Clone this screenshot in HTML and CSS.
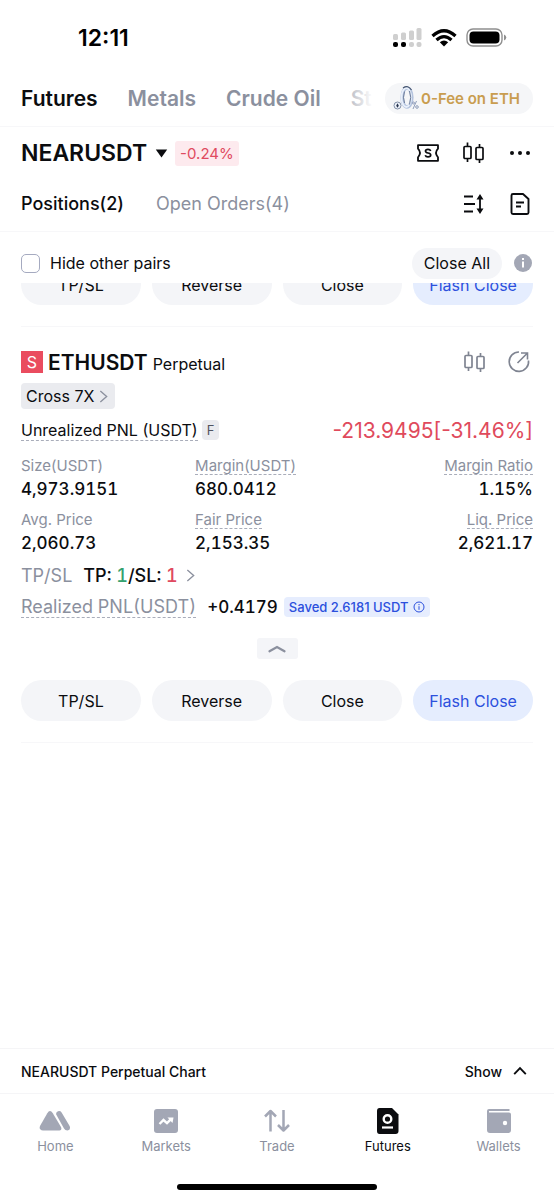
FILE: index.html
```html
<!DOCTYPE html>
<html lang="en">
<head>
    <meta charset="UTF-8">
    <meta name="viewport" content="width=device-width, initial-scale=1.0">
    <title>Futures</title>
    <link rel="stylesheet" href="styles.css">
</head>
<body>
    <!-- shared icons -->
    <svg class="defs" width="0" height="0">
        <symbol id="candles" viewBox="0 0 24 24">
            <g fill="none" stroke="currentColor" stroke-width="1.7">
                <rect x="2" y="5.500" width="7" height="12" rx="1"/>
                <rect x="14" y="6.500" width="7" height="12" rx="1"/>
                <path d="M5.500 1.500v4M5.500 17.500v3.500M17.500 3v3.500M17.500 18.500v3.500"/>
            </g>
        </symbol>
        <symbol id="chevron" viewBox="0 0 10 14">
            <path d="M1.500 1l7 6-7 6" fill="none" stroke="currentColor" stroke-width="1.500"/>
        </symbol>
    </svg>

    <div class="status">
        <span class="time">12:11</span>
        <div class="status-icons">
            <svg width="29" height="20" viewBox="0 0 29 20">
                <g fill="#cfcfcf">
                    <rect x="0" y="6" width="5" height="6" rx="1.500"/>
                    <rect x="8" y="4.500" width="5" height="7.500" rx="1.500"/>
                    <rect x="16" y="2.500" width="5" height="9.500" rx="1.500"/>
                    <rect x="23.500" y="0" width="5" height="12" rx="1.500"/>
                    <rect x="16" y="14" width="5" height="5" rx="2"/>
                    <rect x="23.500" y="14" width="5" height="5" rx="2"/>
                </g>
                <rect x="0" y="14" width="5" height="5" rx="2"/>
                <rect x="8" y="14" width="5" height="5" rx="2"/>
            </svg>
            <svg width="26" height="20" viewBox="0 0 26 20">
                <g fill="none" stroke="#000" stroke-width="3.300">
                    <path d="M1.500 8Q13-2.500 24.500 8"/>
                    <path d="M5.500 12Q13 5.200 20.500 12"/>
                </g>
                <path d="M13 18.500l-4.200-4.300q4.200-3.200 8.400 0z"/>
            </svg>
            <svg width="41" height="20" viewBox="0 0 41 20">
                <rect x="1" y="1" width="35" height="17" rx="6" fill="none" stroke="#8f8f8f" stroke-width="1.400"/>
                <rect x="3.500" y="3.500" width="30" height="12" rx="4"/>
                <path d="M38 6.500q2.300 1 2.300 3t-2.300 3z" fill="#8f8f8f"/>
            </svg>
        </div>
    </div>

    <nav class="markets">
        <div class="market-tabs">
            <a href="#" class="active">Futures</a>
            <a href="#">Metals</a>
            <a href="#">Crude Oil</a>
            <a href="#">St</a>
        </div>
        <a href="#" class="promo">
            <svg width="26" height="26" viewBox="0 0 26 26">
                <ellipse cx="14" cy="12.500" rx="4.800" ry="9.500" fill="none" stroke="#b4c3de" stroke-width="3.600"/>
                <ellipse cx="13.300" cy="12.500" rx="4.800" ry="9.500" fill="none" stroke="#e9f0fb" stroke-width="1.800"/>
                <path d="M16.500 6q2.500 6 0 13.500M11.500 18q-2-5.500 0-11.500" fill="none" stroke="#6b7b99"/>
                <path d="M10 3Q15-.500 18.500 5" fill="none" stroke="#46556f" stroke-width="1.200"/>
                <circle cx="4.500" cy="20.500" r="3.500" fill="#eef3fb" stroke="#8491a8"/>
                <path d="M4.500 18.300l-1.300 2.400 1.300 2 1.300-2z" fill="#26334d"/>
                <path d="M20 24l3.500-8" stroke="#8f9dba"/>
                <circle cx="20.500" cy="18" r="1" fill="none" stroke="#8f9dba"/>
                <circle cx="24" cy="22" r="1.300" fill="none" stroke="#8f9dba"/>
            </svg>
            0-Fee on ETH
        </a>
    </nav>

    <header class="pair">
        <button type="button" class="pair-name">NEARUSDT
            <svg width="13" height="9" viewBox="0 0 13 9"><path d="M.8.5h11.400L6.500 8.500z" fill="currentColor"/></svg>
        </button>
        <span class="change">-0.24%</span>
        <div class="tools">
            <button type="button" aria-label="Coupons">
                <svg width="24" height="24" viewBox="0 0 24 24">
                    <path d="M2 4.200h20v3.500q-4 4.300 0 8.600v3.500H2v-3.500q4-4.300 0-8.600z" fill="none" stroke="currentColor" stroke-width="1.800" stroke-linejoin="round"/>
                    <path d="M14.700 10q-.6-1.700-2.700-1.700-2.500 0-2.500 1.800 0 1.500 2.500 1.900 2.700.4 2.700 2.100 0 1.800-2.700 1.800-2.200 0-2.800-1.700" fill="none" stroke="currentColor" stroke-width="1.700"/>
                </svg>
            </button>
            <button type="button" aria-label="Chart"><svg width="24" height="24"><use href="#candles"/></svg></button>
            <button type="button" aria-label="More">
                <svg width="24" height="24" viewBox="0 0 24 24" fill="currentColor"><circle cx="4" cy="12" r="2"/><circle cx="12" cy="12" r="2"/><circle cx="20" cy="12" r="2"/></svg>
            </button>
        </div>
    </header>

    <nav class="tabs">
        <a href="#" class="active">Positions(2)</a>
        <a href="#">Open Orders(4)</a>
        <div class="tools">
            <button type="button" aria-label="Sort">
                <svg width="24" height="24" viewBox="0 0 24 24">
                    <path d="M2 4.500h9M2 12h11M2 19.500h9M18 5v14" fill="none" stroke="currentColor" stroke-width="1.800"/>
                    <path d="M18 2l3.500 5.500h-7zM18 22l-3.500-5.500h7z" fill="currentColor"/>
                </svg>
            </button>
            <button type="button" aria-label="History">
                <svg width="24" height="24" viewBox="0 0 24 24" fill="none" stroke="currentColor" stroke-width="1.900" stroke-linejoin="round">
                    <path d="M5 2h10l5.500 5v13.500q0 1.500-1.500 1.500H5q-1.500 0-1.500-1.500v-17Q3.500 2 5 2z"/>
                    <path d="M8 10.500h8M8 14.500h5"/>
                </svg>
            </button>
        </div>
    </nav>

    <div class="filter">
        <label><input type="checkbox"> Hide other pairs</label>
        <button type="button" class="close-all">Close All</button>
        <button type="button" class="info" aria-label="Info">
            <svg width="18" height="18" viewBox="0 0 18 18"><circle cx="9" cy="9" r="9" fill="#a3a7b5"/><path d="M9 7.500v6M9 4v2" stroke="#fff" stroke-width="2"/></svg>
        </button>
    </div>

    <main class="positions">
        <section class="position scrolled">
            <div class="actions">
                <button type="button">TP/SL</button>
                <button type="button">Reverse</button>
                <button type="button">Close</button>
                <button type="button" class="flash">Flash Close</button>
            </div>
        </section>

        <section class="position">
            <div class="position-head">
                <span class="side">S</span>
                <h2>ETHUSDT</h2>
                <span class="type">Perpetual</span>
                <div class="tools">
                    <button type="button" aria-label="Chart"><svg width="24" height="24"><use href="#candles"/></svg></button>
                    <button type="button" aria-label="Share">
                        <svg width="24" height="24" viewBox="0 0 24 24" fill="none" stroke="currentColor" stroke-width="1.600">
                            <path d="M12 2a9.700 9.700 0 1 0 9.500 8.500M10.500 13L20 3.500M14 3H20.500V9.500"/>
                        </svg>
                    </button>
                </div>
            </div>
            <button type="button" class="leverage">Cross 7X <svg width="9" height="13"><use href="#chevron"/></svg></button>
            <div class="pnl">
                <span class="hint">Unrealized PNL (USDT)</span>
                <span class="badge">F</span>
                <span class="pnl-value">-213.9495[-31.46%]</span>
            </div>
            <dl class="stats">
                <div><dt>Size(USDT)</dt><dd>4,973.9151</dd></div>
                <div><dt class="hint">Margin(USDT)</dt><dd>680.0412</dd></div>
                <div><dt class="hint">Margin Ratio</dt><dd>1.15%</dd></div>
                <div><dt>Avg. Price</dt><dd>2,060.73</dd></div>
                <div><dt class="hint">Fair Price</dt><dd>2,153.35</dd></div>
                <div><dt class="hint">Liq. Price</dt><dd>2,621.17</dd></div>
            </dl>
            <div class="line">
                <span class="muted">TP/SL</span>
                <span>TP: <span class="green">1</span>/SL: <span class="red">1</span></span>
                <svg class="muted" width="9" height="13"><use href="#chevron"/></svg>
            </div>
            <div class="line realized">
                <span class="muted hint">Realized PNL(USDT)</span>
                <span class="amount">+0.4179</span>
                <button type="button" class="saved">Saved 2.6181 USDT
                    <svg width="12" height="12" viewBox="0 0 12 12" fill="none" stroke="currentColor"><circle cx="6" cy="6" r="5"/><path d="M6 5.200v3.600M6 3v1.200"/></svg>
                </button>
            </div>
            <button type="button" class="fold" aria-label="Collapse">
                <svg width="18" height="8" viewBox="0 0 18 8"><path d="M1.500 6.300L9 2l7.500 4.300" fill="none" stroke="currentColor" stroke-width="2.200" stroke-linecap="round"/></svg>
            </button>
            <div class="actions">
                <button type="button">TP/SL</button>
                <button type="button">Reverse</button>
                <button type="button">Close</button>
                <button type="button" class="flash">Flash Close</button>
            </div>
        </section>
    </main>

    <div class="chart-bar">
        <span>NEARUSDT Perpetual Chart</span>
        <button type="button">Show
            <svg width="14" height="10" viewBox="0 0 14 10"><path d="M1.200 8.200L7 2.200l5.800 6" fill="none" stroke="currentColor" stroke-width="1.900"/></svg>
        </button>
    </div>

    <nav class="bottom-nav">
        <a href="#">
            <svg width="32" height="28" viewBox="0 0 32 28" fill="currentColor">
                <path d="M8.300 6.200q2.700-4.300 5.500 0L22 20q1.300 3-1.500 3.500H4q-4.500-.5-3-4.500z"/>
                <path d="M17.200 7.500q-.5-2.500 1.800-3.200 2.200-.8 3.600 1.200l8 13.500q1.500 3.700-2.100 4.500-2.500 0-3.500-2z"/>
            </svg>
            Home
        </a>
        <a href="#">
            <svg width="28" height="28" viewBox="0 0 28 28">
                <rect x="2" y="2" width="24" height="24" rx="3" fill="currentColor"/>
                <path d="M7.500 17l4-4 3.500 3.200 4-4" fill="none" stroke="#fff" stroke-width="2.400"/><path d="M15.500 10.500h6l-1 5.500z" fill="#fff"/>
            </svg>
            Markets
        </a>
        <a href="#">
            <svg width="28" height="28" viewBox="0 0 28 28" fill="none" stroke="currentColor" stroke-width="2.500" stroke-linejoin="round">
                <path d="M7.500 24.500V4M2 9.500L7.500 4 13 9.500M20.500 3v20.500M15 18l5.500 5.500L26 18"/>
            </svg>
            Trade
        </a>
        <a href="#" class="active">
            <svg width="28" height="28" viewBox="0 0 28 28">
                <path d="M5.500 1h12.500L24.500 7.500V24q0 3-3 3h-16q-2.500 0-2.500-3V4q0-3 2.500-3z" fill="currentColor"/>
                <circle cx="13.500" cy="12" r="3.800" fill="none" stroke="#fff" stroke-width="2.400"/><path d="M8 20.500h11" stroke="#fff" stroke-width="2.200"/>
            </svg>
            Futures
        </a>
        <a href="#">
            <svg width="28" height="28" viewBox="0 0 28 28">
                <path d="M4 2h20.500v2H4v1.500h20q2 0 2 2V23q0 3-3 3H5q-3 0-3-3V4q0-2 2-2z" fill="currentColor"/><circle cx="20" cy="16" r="2.200" fill="#fff"/>
            </svg>
            Wallets
        </a>
    </nav>
    <div class="home-bar"></div>
</body>
</html>
```
FILE: styles.css
```css
* {
    box-sizing: border-box;
}
body {
    margin: 0;
    min-height: 100vh;
    display: flex;
    flex-direction: column;
    background-color: #fff;
    color: #0b0c0f;
    font-family: Inter, "Liberation Sans", sans-serif;
    font-size: 16px;
}
a {
    color: #8b909e;
    text-decoration: none;
}
.active {
    color: #0b0c0f;
}
button {
    padding: 0;
    border: none;
    background: none;
    color: inherit;
    font: inherit;
    cursor: pointer;
}
svg {
    display: block;
    flex-shrink: 0;
}
.defs {
    position: absolute;
}
.status {
    display: flex;
    justify-content: space-between;
    align-items: center;
    height: 70px;
    padding: 5px 47px 0 78px;
    color: #000;
}
.time {
    font-size: 23px;
    font-weight: 600;
}
.status-icons {
    display: flex;
    align-items: center;
    gap: 9px;
}
.markets {
    display: flex;
    align-items: center;
    height: 57px;
    padding: 0 21px;
    border-bottom: 1px solid #f7f7f9;
}
.market-tabs {
    position: relative;
    display: flex;
    flex: 1;
    gap: 30px;
    overflow: hidden;
    font-size: 21px;
    font-weight: 600;
    white-space: nowrap;
}
/* fade out the tabs that run under the promo */
.market-tabs::after {
    content: "";
    position: absolute;
    top: 0;
    right: 0;
    width: 40px;
    height: 100%;
    background: linear-gradient(to right, rgba(255, 255, 255, 0.3), #fff 70%);
}
.promo {
    display: flex;
    align-items: center;
    gap: 2px;
    height: 31px;
    padding: 0 13px 0 8px;
    border-radius: 16px;
    background-color: #f5f6f8;
    color: #c99d4f;
    font-size: 15px;
    font-weight: 600;
}
.pair {
    display: flex;
    align-items: center;
    gap: 7px;
    height: 52px;
    padding: 0 21px;
}
.pair-name {
    display: flex;
    align-items: center;
    gap: 8px;
    font-size: 23px;
    font-weight: 600;
}
.change {
    padding: 0 5px;
    border-radius: 3px;
    background-color: #fdeaee;
    color: #e04a60;
    font-size: 15px;
    line-height: 25px;
}
.tools {
    display: flex;
    gap: 22px;
    margin-left: auto;
    padding-right: 1px;
}
.tabs {
    display: flex;
    align-items: center;
    gap: 32px;
    height: 53px;
    padding: 0 21px 3px;
    border-bottom: 1px solid #f7f7f9;
    font-size: 18px;
}
.tabs .active {
    font-weight: 500;
}
.filter {
    display: flex;
    align-items: center;
    height: 51px;
    padding: 11px 22px 0 21px;
}
.filter label {
    display: flex;
    align-items: center;
    gap: 10px;
    margin-right: auto;
}
.filter input {
    appearance: none;
    width: 19px;
    height: 19px;
    margin: 0;
    border: 1px solid #a5aac0;
    border-radius: 5px;
}
.filter input:checked {
    background-color: #2c50dd;
}
.close-all {
    height: 31px;
    padding: 0 12px;
    border-radius: 16px;
    background-color: #f4f5f8;
}
.info {
    margin-left: 12px;
}
.positions {
    flex: 1;
    overflow: hidden;
    padding: 0 21px;
}
.position {
    display: flex;
    flex-direction: column;
    padding: 23px 0 21px;
    border-bottom: 1px solid #f7f7f9;
}
/* the first position is scrolled under the filter row */
.scrolled {
    margin-top: -42px;
}
.position-head {
    display: flex;
    align-items: center;
    gap: 5px;
    height: 24px;
}
.position-head .tools {
    gap: 20px;
    padding-right: 2px;
    color: #7f8491;
}
.position-head h2 {
    margin: 0;
    font-size: 21px;
    font-weight: 600;
}
.side {
    width: 22px;
    background-color: #ea4c5f;
    color: #fff;
    line-height: 22px;
    text-align: center;
}
.type {
    padding-top: 4px;
}
.leverage {
    display: flex;
    align-items: center;
    align-self: flex-start;
    gap: 5px;
    height: 26px;
    margin-top: 9px;
    padding: 0 7px 0 5px;
    border-radius: 4px;
    background-color: #eaebef;
}
.leverage svg {
    color: #8b909e;
}
.pnl {
    display: flex;
    align-items: center;
    gap: 4px;
    height: 24px;
    margin-top: 9px;
}
.hint {
    border-bottom: 1px dashed #a9adba;
}
.badge {
    padding: 0 5px;
    border-radius: 4px;
    background-color: #eaebef;
    color: #50545f;
    font-size: 13px;
    line-height: 20px;
}
.pnl-value {
    margin-left: auto;
    color: #e04a5c;
    font-size: 21px;
}
.stats {
    display: grid;
    grid-template-columns: 34% 1fr auto;
    row-gap: 10px;
    margin: 15px 0 8px;
}
.stats div:nth-child(3n) {
    text-align: right;
}
.stats dt {
    width: fit-content;
    height: 18px;
    color: #8b909e;
    font-size: 15px;
    line-height: 18px;
}
.stats div:nth-child(3n) dt {
    margin-left: auto;
}
.stats dd {
    margin: 3px 0 0;
    font-size: 17px;
    font-weight: 500;
    font-variant-numeric: tabular-nums;
    line-height: 23px;
}
.line {
    display: flex;
    align-items: center;
    gap: 11px;
    height: 24px;
    font-size: 18px;
    font-weight: 500;
    font-variant-numeric: tabular-nums;
}
.realized {
    margin-top: 8px;
}
.amount {
    font-size: 17px;
}
.muted {
    color: #8b909e;
    font-weight: 400;
}
.line svg.muted {
    margin-left: -3px;
}
.green {
    color: #35a26f;
}
.red {
    color: #e04a60;
}
.saved {
    display: flex;
    align-items: center;
    gap: 4px;
    height: 20px;
    margin-left: -5px;
    padding: 0 5px;
    border-radius: 4px;
    background-color: #e6edfe;
    color: #2c50dd;
    font-size: 13px;
    font-weight: 500;
    font-variant-numeric: normal;
}
.fold {
    display: flex;
    justify-content: center;
    align-items: center;
    align-self: center;
    width: 41px;
    height: 21px;
    margin: 19px 0 21px;
    border-radius: 3px;
    background-color: #f4f5f8;
    color: #8b909e;
}
.actions {
    display: grid;
    grid-template-columns: repeat(4, 1fr);
    gap: 11px;
}
.actions button {
    height: 41px;
    border-radius: 21px;
    background-color: #f4f5f8;
}
.actions .flash {
    background-color: #e5edfe;
    color: #2c50dd;
}
.chart-bar {
    display: flex;
    justify-content: space-between;
    align-items: center;
    height: 46px;
    padding: 0 27px 0 21px;
    border-top: 1px solid #f5f5f7;
    border-bottom: 1px solid #f5f5f7;
    font-size: 14px;
    font-weight: 500;
}
.chart-bar button {
    display: flex;
    align-items: center;
    gap: 11px;
}
.bottom-nav {
    display: grid;
    grid-template-columns: repeat(5, 1fr);
    height: 90px;
    padding-top: 13px;
}
.bottom-nav a {
    display: flex;
    flex-direction: column;
    align-items: center;
    gap: 2px;
    font-size: 13px;
    line-height: 18px;
}
.bottom-nav svg {
    color: #a3a7b5;
}
.bottom-nav .active svg {
    color: #0b0c0f;
}
.home-bar {
    align-self: center;
    width: 36%;
    height: 6px;
    margin-bottom: 10px;
    border-radius: 3px;
    background-color: #000;
}
```
